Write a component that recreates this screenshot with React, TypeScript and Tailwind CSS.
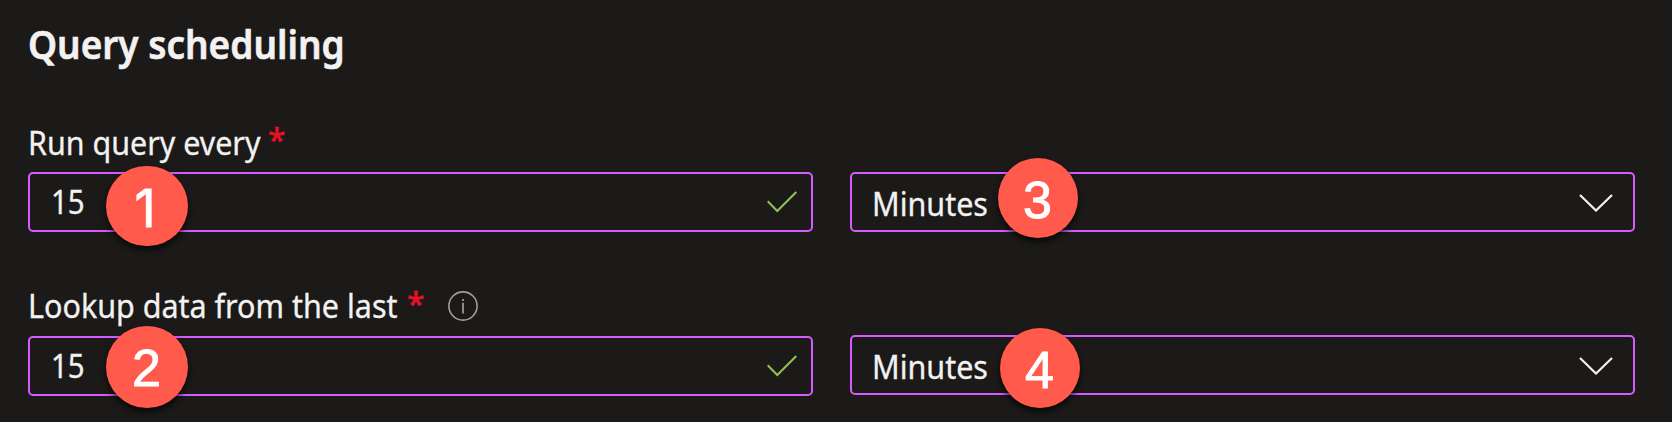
import React from "react";

const textFont = "font-['Noto_Sans','Open_Sans',sans-serif] [-webkit-text-stroke:0.3px_currentColor]";

function Badge({ n, className, digit = "" }: { n: string; className: string; digit?: string }) {
  return (
    <div
      className={`absolute flex items-center justify-center rounded-full bg-[#ff5a4b] font-['Liberation_Sans',sans-serif] text-[52px] leading-none text-white shadow-[0_4px_6px_rgba(0,0,0,0.7)] ${className}`}
    >
      <span className={`[-webkit-text-stroke:0.9px_white] ${digit}`}>{n}</span>
    </div>
  );
}

function Check() {
  return (
    <svg width="30" height="22" viewBox="0 0 30 22" fill="none" stroke="#92c353" strokeWidth="2">
      <path d="M0.7 10.3 L10.3 20 L29.3 1" />
    </svg>
  );
}

function Chevron() {
  return (
    <svg width="34" height="18" viewBox="0 0 34 18" fill="none" stroke="#f3f2f1" strokeWidth="2.2">
      <path d="M1 1 L17 16.5 L33 1" />
    </svg>
  );
}

function Info() {
  return (
    <svg width="30" height="30" viewBox="0 0 30 30" fill="none" stroke="#a19f9d">
      <circle cx="15" cy="15" r="14.1" strokeWidth="1.6" />
      <path d="M15 11.7V22.5" strokeWidth="1.7" />
      <path d="M15 8V10" strokeWidth="1.8" />
    </svg>
  );
}

const box = "relative flex h-[60px] w-[785px] items-center justify-between rounded-[5px] border-2 border-[#d65bff]";

export default function App() {
  return (
    <main className={`h-[422px] w-[1672px] overflow-hidden bg-[#1b1a19] pl-7 text-[32px] text-[#f3f2f1] ${textFont}`}>
      <h1 className="flex h-[120px] pt-[17px] text-[39px] leading-[54px] font-semibold [-webkit-text-stroke:0.6px_currentColor]">
        <span className="origin-left scale-x-[0.948] whitespace-nowrap">Query scheduling</span>
      </h1>
      <section>
        <div className="flex h-[52px] items-center pb-[7px] leading-[44px]">
          <span className="w-[240px] origin-left scale-x-[0.951] whitespace-nowrap">Run query every</span>
          <span className="pb-[5px] font-medium text-[#e81123]">*</span>
        </div>
        <div className="flex gap-[37px]">
          <div className={`${box} pr-[14px] pl-[21px]`}>
            <span className="origin-left scale-x-[0.92]">15</span>
            <Check />
            <Badge n="1" className="top-[-8px] left-[76px] h-20 w-[82px] pt-[5px] pr-[4px]" digit="font-['Inter']" />
          </div>
          <div className={`${box} pt-[2px] pr-[20px] pl-[20px]`}>
            <span className="origin-left scale-x-[0.952] pt-px">Minutes</span>
            <Chevron />
            <Badge n="3" className="top-[-16px] left-[146px] size-20 pt-[4px] pr-px" />
          </div>
        </div>
      </section>
      <section className="pt-[51px]">
        <div className="flex h-[52px] items-center pb-[7px] leading-[44px]">
          <span className="w-[379px] origin-left scale-x-[0.953] whitespace-nowrap">Lookup data from the last</span>
          <span className="w-[41px] pb-[3px] font-medium text-[#e81123]">*</span>
          <Info />
        </div>
        <div className="flex gap-[37px]">
          <div className={`${box} mt-px pr-[14px] pl-[21px]`}>
            <span className="origin-left scale-x-[0.92]">15</span>
            <Check />
            <Badge n="2" className="top-[-12px] left-[76px] size-[82px] pt-[2px] pr-px" />
          </div>
          <div className={`${box} pt-[2px] pr-[20px] pl-[20px]`}>
            <span className="origin-left scale-x-[0.952] pt-px">Minutes</span>
            <Chevron />
            <Badge n="4" className="top-[-9px] left-[148px] size-20 pt-[3px] pr-px" />
          </div>
        </div>
      </section>
    </main>
  );
}
